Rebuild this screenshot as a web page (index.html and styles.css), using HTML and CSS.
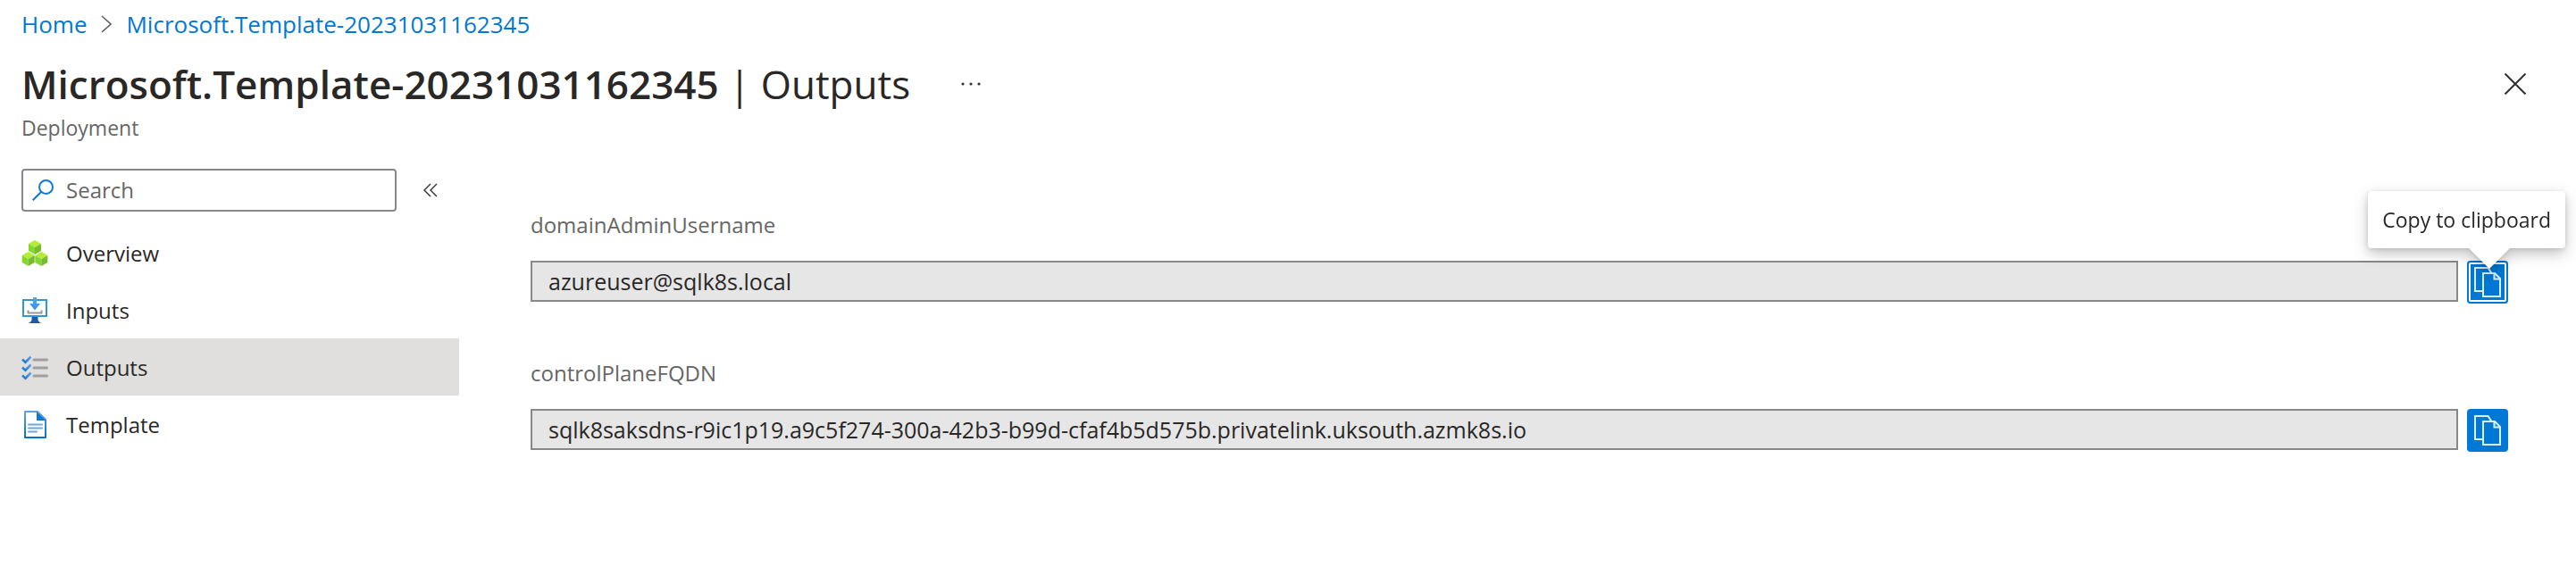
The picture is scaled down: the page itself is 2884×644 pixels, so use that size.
FILE: index.html
```html
<!DOCTYPE html>
<html lang="en">
<head>
<meta charset="utf-8">
<title>Microsoft.Template-20231031162345 | Outputs</title>
<link rel="stylesheet" href="styles.css">
</head>
<body>
<nav class="breadcrumb" aria-label="Breadcrumb">
  <a href="#">Home</a>
  <svg class="crumb-sep" width="12" height="20" viewBox="0 0 12 20" aria-hidden="true"><path d="M1 1l10 9-10 9" fill="none" stroke="#605e5c" stroke-width="1.6"/></svg>
  <a href="#">Microsoft.Template-20231031162345</a>
</nav>

<header class="blade-header">
  <div class="title-row">
    <h1 class="title"><strong>Microsoft.Template-20231031162345</strong> | Outputs</h1>
    <button class="icon-button more" type="button" aria-label="More actions">
      <svg width="24" height="6" viewBox="0 0 24 6"><g fill="#323130"><circle cx="3" cy="3" r="1.6"/><circle cx="12" cy="3" r="1.6"/><circle cx="21" cy="3" r="1.6"/></g></svg>
    </button>
    <button class="icon-button close" type="button" aria-label="Close">
      <svg width="24" height="24" viewBox="0 0 24 24"><path d="M0.5 0.5l23 23M23.5 0.5l-23 23" stroke="#323130" stroke-width="2"/></svg>
    </button>
  </div>
  <p class="subtitle">Deployment</p>
</header>

<div class="blade-body">
  <aside class="sidebar">
    <div class="search-row">
      <label class="search-box">
        <svg width="24" height="24" viewBox="0 0 24 24" aria-hidden="true"><g fill="none" stroke="#0f78d4" stroke-width="2"><circle cx="15.5" cy="8.5" r="7.5"/><path d="M10.2 13.8L0.7 23.3"/></g></svg>
        <input class="search-input" type="text" placeholder="Search" aria-label="Search">
      </label>
      <button class="icon-button" type="button" aria-label="Collapse menu">
        <svg width="16" height="16" viewBox="0 0 16 16"><path d="M8 1L1 8l7 7M15 1L8 8l7 7" fill="none" stroke="#323130" stroke-width="1.4"/></svg>
      </button>
    </div>
    <nav class="menu" aria-label="Deployment">
      <a class="menu-item" href="#">
        <svg width="30" height="30" viewBox="0 0 30 30" aria-hidden="true">
          <g id="cube"><path d="M15 0l7 4-7 4-7-4z" fill="#b4ec36"/><path d="M8 4l7 4v8l-7-4z" fill="#86d633"/><path d="M22 4l-7 4v8l7-4z" fill="#76bc2d"/></g>
          <use href="#cube" x="-7.3" y="13"/>
          <use href="#cube" x="7.3" y="13"/>
        </svg>
        Overview
      </a>
      <a class="menu-item" href="#">
        <svg width="30" height="30" viewBox="0 0 30 30" aria-hidden="true">
          <defs><linearGradient id="arrow" x2="0" y2="1"><stop stop-color="#5ea0ef"/><stop offset="1" stop-color="#2f95e8"/></linearGradient></defs>
          <path d="M2 3h26v18H2z" fill="#fff" stroke="#2f96d8" stroke-width="2"/>
          <path d="M11.5 22h7v3.500q1 2.500 4 3.500H7.500q3-1 4-3.500z" fill="#1d59ad"/>
          <path d="M7.5 14.500v3h15v-3" fill="none" stroke="#999" stroke-width="2"/>
          <path d="M13 0h4v7h4l-6 7.500-6-7.500h4z" fill="url(#arrow)"/>
        </svg>
        Inputs
      </a>
      <a class="menu-item selected" href="#" aria-current="page">
        <svg width="30" height="30" viewBox="0 0 30 30" aria-hidden="true">
          <defs><linearGradient id="tick" x1="0" x2="1" y1="1" y2="0"><stop stop-color="#0f78d4"/><stop offset="1" stop-color="#5ea0ef"/></linearGradient></defs>
          <path d="M14 6h14.500M14 15h14.500M14 24h14.500" stroke="#9f9f9f" stroke-width="3" stroke-linecap="round"/>
          <g fill="none" stroke="url(#tick)" stroke-width="2.600"><path d="M1 5.500l3.500 3.200 6-6.200"/><path d="M1 14.500l3.500 3.200 6-6.200"/><path d="M1 23.500l3.500 3.200 6-6.200"/></g>
        </svg>
        Outputs
      </a>
      <a class="menu-item" href="#">
        <svg width="30" height="32" viewBox="0 0 30 32" aria-hidden="true">
          <defs><linearGradient id="page" x2="0" y2="1"><stop stop-color="#5ea0ef"/><stop offset="1" stop-color="#0a70c8"/></linearGradient></defs>
          <path d="M4 1h14l9 9v20H4z" fill="#fff" stroke="url(#page)" stroke-width="2" stroke-linejoin="round"/>
          <path d="M17 1l10 10H17z" fill="#0f78d4"/>
          <path d="M8 15.500h15M8 19.500h15M8 23.500h9" stroke="#6ea5e8" stroke-width="2" stroke-linecap="round"/>
        </svg>
        Template
      </a>
    </nav>
  </aside>

  <main class="outputs">
    <div class="field">
      <label class="field-label" for="admin">domainAdminUsername</label>
      <div class="field-row">
        <input class="field-input" id="admin" type="text" readonly value="azureuser@sqlk8s.local">
        <div class="copy">
          <button class="copy-button focused" type="button" aria-label="Copy to clipboard" aria-describedby="copy-tip">
            <svg width="30" height="34" viewBox="0 0 30 34"><g fill="#0078d4" stroke="#d8f1ff" stroke-width="2"><path d="M10 27H1V1h14.500l4 6"/><path d="M10 7h13l6 6v20H10z"/><path d="M22.500 7v6.500h6.500" fill="none"/></g></svg>
          </button>
          <div class="tooltip" id="copy-tip" role="tooltip">Copy to clipboard</div>
        </div>
      </div>
    </div>
    <div class="field">
      <label class="field-label" for="fqdn">controlPlaneFQDN</label>
      <div class="field-row">
        <input class="field-input" id="fqdn" type="text" readonly value="sqlk8saksdns-r9ic1p19.a9c5f274-300a-42b3-b99d-cfaf4b5d575b.privatelink.uksouth.azmk8s.io">
        <div class="copy">
          <button class="copy-button" type="button" aria-label="Copy to clipboard">
            <svg width="30" height="34" viewBox="0 0 30 34"><g fill="#0078d4" stroke="#d8f1ff" stroke-width="2"><path d="M10 27H1V1h14.500l4 6"/><path d="M10 7h13l6 6v20H10z"/><path d="M22.500 7v6.500h6.500" fill="none"/></g></svg>
          </button>
        </div>
      </div>
    </div>
  </main>
</div>
</body>
</html>
```
FILE: styles.css
```css
* { box-sizing: border-box; }

body {
  margin: 0;
  background: #fff;
  color: #292827;
  font: 24px/32px "Open Sans", "Noto Sans", sans-serif;
}

a { color: #0078d4; text-decoration: none; }

svg { display: block; flex: none; }

.breadcrumb {
  display: flex;
  align-items: center;
  gap: 16px;
  padding: 11px 24px 0;
  font-size: 26px;
}

.blade-header { padding: 18px 56px 0 24px; }

.title-row { display: flex; align-items: center; }

.title {
  margin: 0;
  font-size: 44px;
  font-weight: 400;
  line-height: 66px;
}

.title strong { font-weight: 600; }

.icon-button {
  display: flex;
  padding: 0;
  border: 0;
  background: none;
}

.more { margin-left: 56px; }
.close { margin-left: auto; }

.subtitle {
  margin: 0;
  color: #666;
  font-size: 23px;
}

.blade-body {
  display: flex;
  align-items: flex-start;
  padding-top: 30px;
}

.sidebar { flex: none; width: 514px; }

.search-row {
  display: flex;
  align-items: center;
  gap: 30px;
  padding: 0 24px;
}

.search-box {
  display: flex;
  align-items: center;
  gap: 14px;
  flex: 1;
  height: 48px;
  padding: 0 10px;
  border: 2px solid #8a8886;
  border-radius: 4px;
}

.search-input {
  flex: 1;
  min-width: 0;
  padding: 0;
  border: 0;
  outline: 0;
  background: none;
  color: inherit;
  font: inherit;
}

.search-input::placeholder { color: #666; opacity: 1; }

.menu { padding-top: 14px; }

.menu-item {
  display: flex;
  align-items: center;
  gap: 20px;
  height: 64px;
  padding: 2px 24px 0;
  color: inherit;
}

.menu-item.selected { background: #e1dfdd; }

.outputs {
  display: flex;
  flex: 1;
  flex-direction: column;
  gap: 62px;
  padding: 47px 76px 0 80px;
}

.field {
  display: flex;
  flex-direction: column;
  gap: 24px;
}

.field-label { color: #666; }

.field-row {
  display: flex;
  align-items: flex-start;
  gap: 10px;
}

.field-input {
  flex: 1;
  min-width: 0;
  height: 46px;
  padding: 0 18px;
  border: 2px solid #8a8886;
  border-radius: 0;
  background: #e6e6e6;
  color: inherit;
  font: inherit;
  font-size: 25px;
}

.copy { position: relative; }

.copy-button {
  display: flex;
  align-items: center;
  justify-content: center;
  width: 46px;
  height: 48px;
  padding: 0;
  border: 0;
  border-radius: 4px;
  background: #0078d4;
}

.copy-button.focused {
  box-shadow: inset 0 0 0 2px #0078d4, inset 0 0 0 4px #fff;
}

.tooltip {
  position: absolute;
  z-index: 1;
  right: -64px;
  bottom: 62px;
  padding: 16px;
  border-radius: 4px;
  background: #fff;
  filter: drop-shadow(0 6px 8px rgba(0, 0, 0, 0.22)) drop-shadow(0 1px 2px rgba(0, 0, 0, 0.12));
  font-size: 23px;
  white-space: nowrap;
}

.tooltip::after {
  content: "";
  position: absolute;
  top: 100%;
  right: 62px;
  border: 23px solid transparent;
  border-top-color: #fff;
  border-bottom: 0;
}
```
